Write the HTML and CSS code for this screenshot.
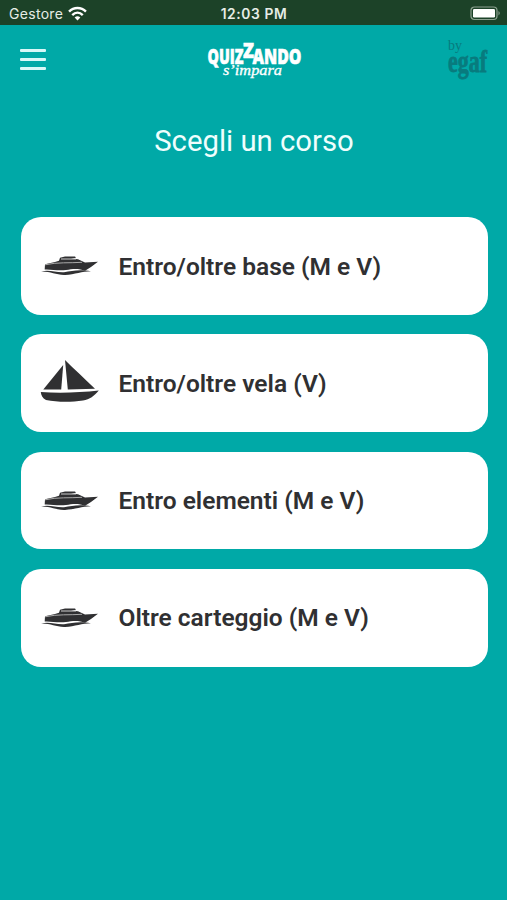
FILE: index.html
```html
<!DOCTYPE html>
<html lang="it">
<head>
    <meta charset="UTF-8">
    <meta name="viewport" content="width=device-width, initial-scale=1.0">
    <title>Quizzando</title>
    <link rel="stylesheet" href="styles.css">
</head>
<body>
    <!-- shared icons -->
    <svg class="sprite" aria-hidden="true">
        <symbol id="yacht" viewBox="0 0 60 24">
            <path d="M15 8 L19 6.8 L20 3.8 L25 2.4 L35 2.6 L36 3.8 L31 4.4 L38 5.2 L45 8.4 L58 7.8 L51 13 L45 16.8 C38 13.8 32 15 26 16 C18 17.2 11 15 4.7 15.5 L5 10.2 Z"/>
            <path class="trim" d="M5 10.8 C17 8 30 9.2 42 8.3"/>
            <path class="trim light" d="M21 5 L36 5"/>
            <path d="M1 17.6 C9 15.2 15 18.6 24 18.2 C32 17.2 38 15.2 51 17.2 C42 17.2 35 20.4 25 20.9 C16 21.2 11 17.4 1 17.6 Z"/>
        </symbol>
        <symbol id="sail" viewBox="0 0 60 44">
            <path d="M23.2 6 L21.2 30.5 L3.3 30.5 Z"/>
            <path d="M25 1 C34 10 45 20 55 29.7 L27.8 30.5 Z"/>
            <path d="M.8 33 C20 34.5 40 33.5 58.8 31.5 C54 37 50 40.5 43 41.5 C31 43.3 17 43.2 6 41 C2.5 39.5 1 36 .8 33 Z"/>
        </symbol>
    </svg>

    <div class="status-bar">
        <div class="carrier">
            <span>Gestore</span>
            <svg class="wifi" viewBox="0 0 18 14">
                <path d="M1 5.3 C5.5 .7 12.5 .7 17 5.3"/>
                <path d="M4 8.5 C7 5.6 11 5.6 14 8.5"/>
                <path class="dot" d="M6.3 10.8 C8 9.3 10 9.3 11.7 10.8 L9 13.6 Z"/>
            </svg>
        </div>
        <div class="time">12:03 PM</div>
        <svg class="battery" viewBox="0 0 31 15">
            <rect class="frame" x="1" y="1" width="26" height="12.5" rx="3.5"/>
            <rect class="level" x="3" y="3" width="22" height="8.5" rx="1.2"/>
            <path class="tip" d="M28.5 5 Q31 7.2 28.5 9.5 Z"/>
        </svg>
    </div>

    <header class="header">
        <button class="menu" type="button" aria-label="Menu">
            <span></span>
            <span></span>
            <span></span>
        </button>
        <svg class="logo" viewBox="0 0 100 42">
            <text class="logo-name" x="2.5" y="25" textLength="36" lengthAdjust="spacingAndGlyphs">QUIZ</text>
            <text class="logo-name" x="38" y="19" textLength="11" lengthAdjust="spacingAndGlyphs">Z</text>
            <text class="logo-name" x="47.5" y="25" textLength="49" lengthAdjust="spacingAndGlyphs">ANDO</text>
            <text class="logo-sub" x="18" y="35.5" textLength="59" lengthAdjust="spacingAndGlyphs">s’impara</text>
        </svg>
        <svg class="brand" viewBox="0 0 44 46">
            <text class="brand-by" x="3" y="13" textLength="14" lengthAdjust="spacingAndGlyphs">by</text>
            <text class="brand-name" x="3" y="35" textLength="39" lengthAdjust="spacingAndGlyphs">egaf</text>
        </svg>
    </header>

    <main class="content">
        <h1>Scegli un corso</h1>
        <div class="courses">
            <a class="course">
                <svg class="yacht"><use href="#yacht"/></svg>
                <span>Entro/oltre base (M e V)</span>
            </a>
            <a class="course">
                <svg class="sail"><use href="#sail"/></svg>
                <span>Entro/oltre vela (V)</span>
            </a>
            <a class="course">
                <svg class="yacht"><use href="#yacht"/></svg>
                <span>Entro elementi (M e V)</span>
            </a>
            <a class="course">
                <svg class="yacht"><use href="#yacht"/></svg>
                <span>Oltre carteggio (M e V)</span>
            </a>
        </div>
    </main>
</body>
</html>
```

FILE: styles.css
```css
* {
    box-sizing: border-box;
}

body {
    margin: 0;
    min-height: 100vh;
    background-color: #00a9a7;
    font-family: Roboto, sans-serif;
    color: #303032;
}

.sprite {
    display: none;
}

.status-bar {
    display: grid;
    grid-template-columns: 1fr auto 1fr;
    align-items: center;
    height: 25px;
    padding: 2px 6px 0 9px;
    background-color: #1c4228;
    color: #e6ede6;
    font-family: Inter, sans-serif;
    font-size: 14px;
}

.carrier {
    display: flex;
    align-items: center;
    gap: 5px;
    letter-spacing: 0.3px;
}

.wifi {
    width: 19px;
    height: 15px;
    fill: none;
    stroke: #fff;
    stroke-width: 2.3;
}

.wifi .dot {
    fill: #fff;
    stroke: none;
}

.time {
    margin-left: -2px;
    font-weight: 600;
    font-size: 13.8px;
    letter-spacing: 0.6px;
}

.battery {
    width: 31px;
    height: 15px;
    justify-self: end;
}

.frame {
    fill: none;
    stroke: #8ba08f;
    stroke-width: 1.2;
}

.level {
    fill: #fff;
}

.tip {
    fill: #8ba08f;
}

.header {
    display: grid;
    grid-template-columns: 1fr 100px 1fr;
    align-items: center;
    height: 69px;
    padding: 0 18px 0 20px;
}

.menu {
    display: flex;
    flex-direction: column;
    gap: 6px;
    width: 26px;
    padding: 0;
    border: none;
    background: none;
}

.menu span {
    height: 3px;
    width: 26px;
    border-radius: 1px;
    background-color: #d8f8f8;
}

.logo {
    width: 100px;
    height: 42px;
    fill: #fff;
    overflow: visible;
}

.logo-name {
    font: 800 21.5px "Open Sans", sans-serif;
    stroke: #fff;
    stroke-width: 0.6;
}

.logo-sub {
    font: italic 14px "Liberation Serif", serif;
    stroke: #fff;
    stroke-width: 0.3;
}

.brand {
    width: 44px;
    height: 46px;
    justify-self: end;
    fill: #087b7e;
    overflow: visible;
}

.brand-by {
    font: 15px "Liberation Serif", serif;
}

.brand-name {
    font: bold 31px "Liberation Serif", serif;
    stroke: #087b7e;
    stroke-width: 0.8;
}

.content {
    padding: 0 19.5px 0 20.5px;
}

h1 {
    margin: 29px 0 58.2px;
    color: #effefd;
    font-size: 29.3px;
    font-weight: 400;
    line-height: 36px;
    text-align: center;
}

.courses {
    display: flex;
    flex-direction: column;
    gap: 19.6px;
}

.course {
    display: flex;
    align-items: center;
    gap: 19px;
    height: 97.7px;
    padding: 0 19px;
    border-radius: 20px;
    background-color: #fff;
    font-size: 24.5px;
    font-weight: 600;
}

.course svg {
    width: 60px;
    fill: #303032;
}

.yacht {
    height: 24px;
}

.sail {
    height: 44px;
    margin-bottom: 5px;
}

.trim {
    fill: none;
    stroke: #aaa;
    stroke-width: 1;
}

.light {
    stroke: #ccc;
}
```
